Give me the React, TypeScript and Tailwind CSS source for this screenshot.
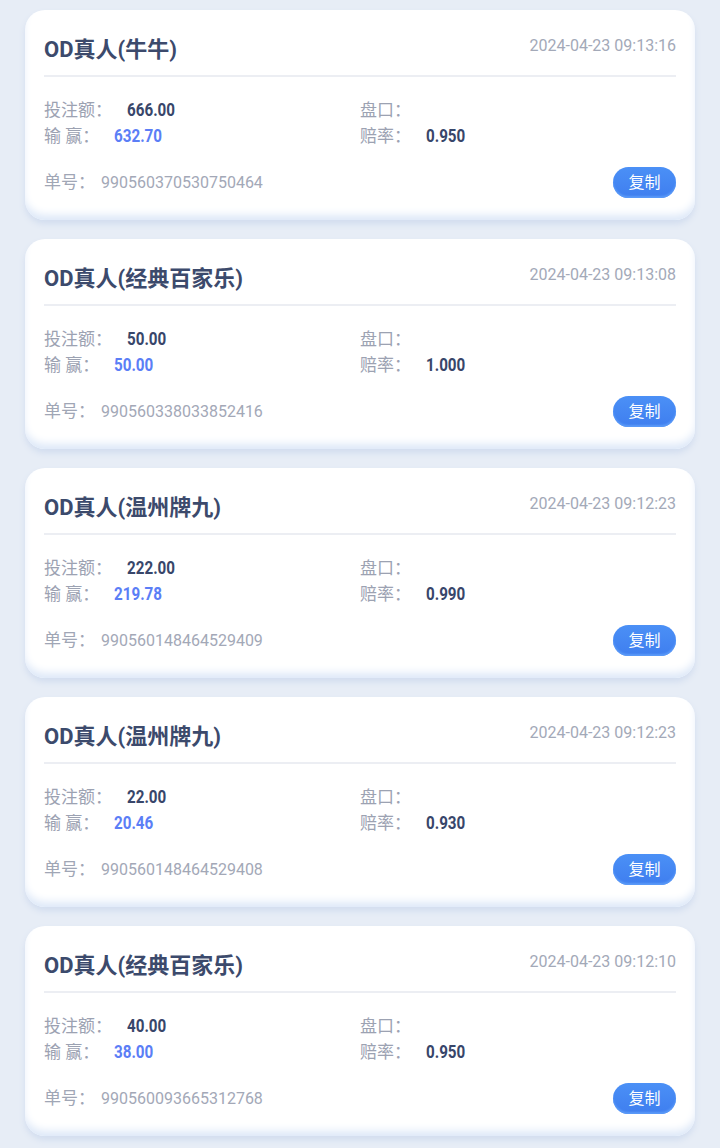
import React from "react";

interface Bet {
  title: string;
  time: string;
  stake: string;
  win: string;
  odds: string;
  orderNo: string;
}

const bets: Bet[] = [
  { title: "OD真人(牛牛)", time: "2024-04-23 09:13:16", stake: "666.00", win: "632.70", odds: "0.950", orderNo: "990560370530750464" },
  { title: "OD真人(经典百家乐)", time: "2024-04-23 09:13:08", stake: "50.00", win: "50.00", odds: "1.000", orderNo: "990560338033852416" },
  { title: "OD真人(温州牌九)", time: "2024-04-23 09:12:23", stake: "222.00", win: "219.78", odds: "0.990", orderNo: "990560148464529409" },
  { title: "OD真人(温州牌九)", time: "2024-04-23 09:12:23", stake: "22.00", win: "20.46", odds: "0.930", orderNo: "990560148464529408" },
  { title: "OD真人(经典百家乐)", time: "2024-04-23 09:12:10", stake: "40.00", win: "38.00", odds: "0.950", orderNo: "990560093665312768" },
];

const sans = "font-['Roboto','Noto_Sans_CJK_SC',sans-serif]";
// condensed look for the amounts
const num =
  "inline-block origin-left scale-x-[0.8] font-['Roboto',sans-serif] text-[19px] font-bold";

function BetCard({ bet }: { bet: Bet }) {
  return (
    <div className="rounded-[20px] bg-white px-[19px] pb-[22px] shadow-[inset_0_-7px_8px_-2px_#dde8f8,0_4px_6px_#d2ddef]">
      <div className="flex h-[67px] items-center justify-between border-b-2 border-[#eceef3] pt-[14px]">
        <h2 className={`${sans} text-[22px] font-bold text-[#3c4a6c]`}>{bet.title}</h2>
        <span className={`${sans} -mt-[7px] text-[16px] text-[#a3a9b8]`}>{bet.time}</span>
      </div>

      <div className="mt-[20px] grid grid-cols-2 text-[17px] leading-[26px] text-[#9ca2b2]">
        <div className="flex items-center">
          <span className={sans}>投注额：</span>
          <span className={`${num} ml-[15px] text-[#38466a]`}>{bet.stake}</span>
        </div>
        <div className="flex items-center">
          <span className={sans}>盘口：</span>
        </div>
        <div className="flex items-center">
          <span className={sans}>输 赢：</span>
          <span className={`${num} ml-[15px] text-[#5b7ef6]`}>{bet.win}</span>
        </div>
        <div className="flex items-center">
          <span className={sans}>赔率：</span>
          <span className={`${num} ml-[15px] text-[#38466a]`}>{bet.odds}</span>
        </div>
      </div>

      <div className="mt-[18px] flex items-center justify-between">
        <div className="flex items-center">
          <span className={`${sans} text-[17px] text-[#a0a6b5]`}>单号：</span>
          <span className={`${sans} ml-[6px] text-[16px] text-[#a3a8b7]`}>{bet.orderNo}</span>
        </div>
        <button
          className={`${sans} h-[31px] w-[63px] rounded-full bg-gradient-to-b from-[#4b90f6] to-[#3f7eef] text-[16px] text-white shadow-[inset_0_-2px_2px_#5b9bf8]`}
        >
          复制
        </button>
      </div>
    </div>
  );
}

export default function App() {
  return (
    <div className="min-h-[1148px] bg-[#e7edf6] px-[25px] pt-[10px]">
      <div className="flex flex-col gap-[19px]">
        {bets.map((bet, i) => (
          <BetCard key={i} bet={bet} />
        ))}
      </div>
    </div>
  );
}
